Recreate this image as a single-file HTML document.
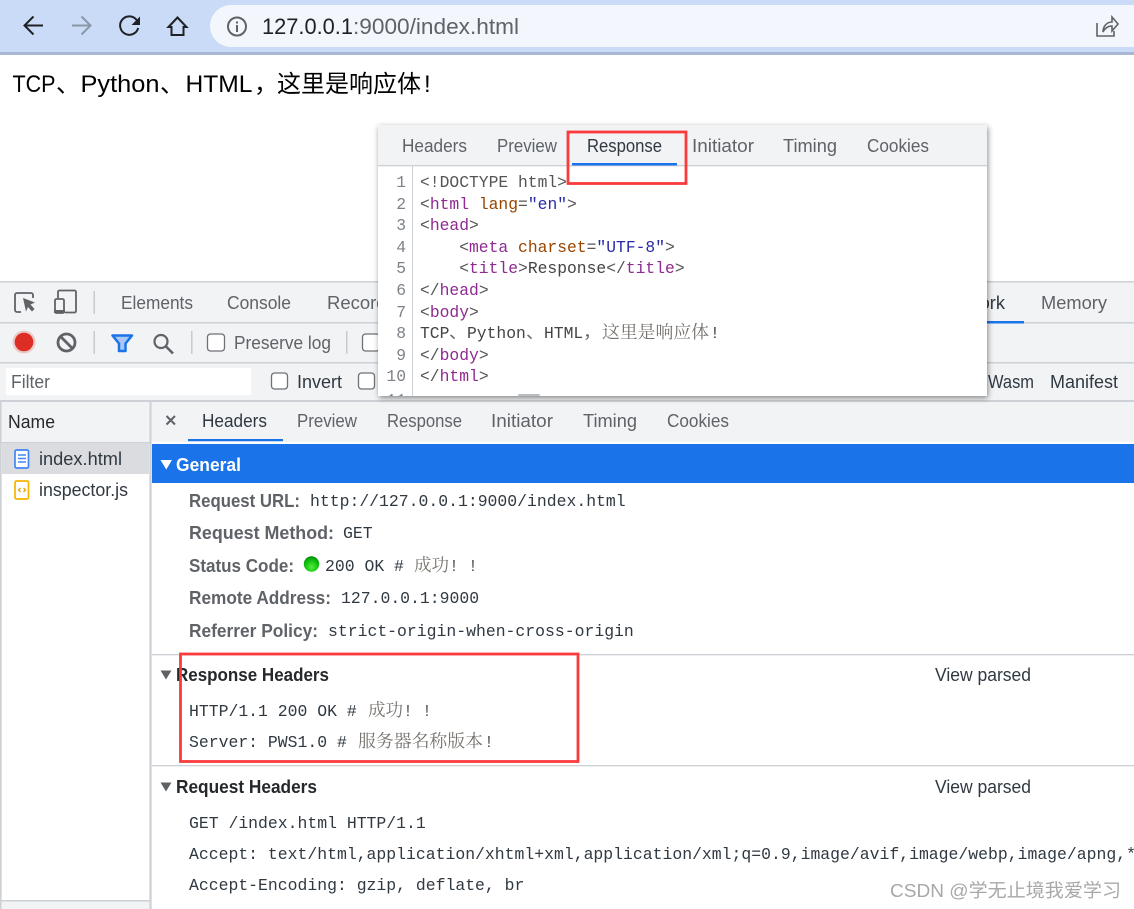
<!DOCTYPE html>
<html lang="zh">
<head>
<meta charset="utf-8">
<title>DevTools Response</title>
<style>
html,body{margin:0;padding:0;background:#fff;width:1134px;height:909px;overflow:hidden}
svg{display:block}
text{white-space:pre}
.s{font-family:"Liberation Sans","Noto Sans CJK SC",sans-serif;font-size:18px;fill:#5f6368}
.d{fill:#303942}
.b{font-family:"Liberation Sans","Noto Sans CJK SC",sans-serif;font-size:18px;font-weight:700;fill:#5f6368}
.h{fill:#26292c}
.m{font-family:"Liberation Mono","Noto Sans CJK SC",monospace;font-size:16.45px;fill:#303942}
.c{font-family:"Liberation Mono","Noto Sans CJK SC",monospace;font-size:16.33px;fill:#555}
.cn{font-family:"Noto Serif CJK SC","Liberation Serif",serif;font-size:17.5px;fill:#77736e}
.g{fill:#8e2a90}.a{fill:#994500}.v{fill:#2a2aa6}.t{fill:#444}
.n{font-family:"Liberation Mono",monospace;font-size:16.33px;fill:#7d8288;text-anchor:end}
.p{font-family:"Liberation Sans","Noto Sans CJK SC",sans-serif;font-size:24px;fill:#000}
</style>
</head>
<body>
<svg width="1134" height="909" viewBox="0 0 1134 909" xmlns="http://www.w3.org/2000/svg">
<defs>
<filter id="sh" x="-5%" y="-5%" width="110%" height="112%"><feDropShadow dx="1" dy="2" stdDeviation="3" flood-color="#000" flood-opacity=".45"/></filter>
<radialGradient id="gd" cx=".5" cy=".7" r=".7"><stop offset="0" stop-color="#52ee3c"/><stop offset=".7" stop-color="#0bb80b"/><stop offset="1" stop-color="#058a05"/></radialGradient>
<clipPath id="pc"><rect x="378" y="125" width="609" height="271"/></clipPath>
</defs>

<!-- browser toolbar -->
<rect width="1134" height="53" fill="#c9dbf6"/>
<rect y="52" width="1134" height="3" fill="#a8b8d3"/>
<rect x="210" y="5" width="1000" height="42" rx="21" fill="#f3f7fd"/>
<g fill="none" stroke-width="2">
<path d="M43 25.500H25M33.500 16.500l-9 9 9 9" stroke="#202124"/>
<path d="M72 25.500H90M81.500 16.500l9 9-9 9" stroke="#8a97a8"/>
<path d="M137 20.500A9.200 9.200 0 1 0 138.200 28" stroke="#202124"/>
<path d="M168.500 27l9-9.500 9 9.500h-3v8h-12v-8z" stroke="#202124" stroke-linejoin="miter"/>
<circle cx="237" cy="26.500" r="9" stroke="#5f6368" stroke-width="2"/>
</g>
<path d="M140 16.500v8.500h-8.500z" fill="#202124"/>
<rect x="236" y="25" width="2" height="7" fill="#5f6368"/><rect x="236" y="21.500" width="2" height="2" fill="#5f6368"/>
<path d="M1097 23v13h17v-5M1103 32c0-6 4-10 9-10v-5l6 7-6 7v-5c-4 0-7 2-9 6z" fill="none" stroke="#5f6368" stroke-width="1.600"/>
<text x="262" y="34" class="s" style="font-size:22px;fill:#202124" textLength="91" lengthAdjust="spacingAndGlyphs">127.0.0.1</text>
<text x="353" y="34" class="s" style="font-size:22px;fill:#5f6368" textLength="166" lengthAdjust="spacingAndGlyphs">:9000/index.html</text>

<!-- page body -->
<text x="12.500" y="92" class="p" textLength="43" lengthAdjust="spacingAndGlyphs">TCP</text>
<text x="56" y="92" class="p">、</text>
<text x="80.500" y="92" class="p" textLength="79" lengthAdjust="spacingAndGlyphs">Python</text>
<text x="160" y="92" class="p">、</text>
<text x="185.500" y="92" class="p" textLength="67" lengthAdjust="spacingAndGlyphs">HTML</text>
<text x="254" y="92" class="p">，</text>
<text x="277" y="92" class="p" textLength="144" lengthAdjust="spacingAndGlyphs">这里是响应体</text>
<text x="424" y="92" class="p">!</text>

<!-- devtools -->
<rect y="281" width="1134" height="628" fill="#f1f3f5"/>
<rect y="281" width="1134" height="1.500" fill="#cdd0d4"/>
<rect y="322" width="1134" height="1.500" fill="#cdd0d4"/>
<rect y="362" width="1134" height="1.500" fill="#cdd0d4"/>
<rect y="400" width="1134" height="2" fill="#cdd0d4"/>

<!-- tab row -->
<path d="M21 312h-4a2 2 0 0 1-2-2v-15a2 2 0 0 1 2-2h14a2 2 0 0 1 2 2v3" fill="none" stroke="#5f6368" stroke-width="1.800"/>
<path d="M23 298l12 4.500-4.500 2 4 4.500-2.500 2.500-4-4.500-2 4.500z" fill="#5f6368"/>
<path d="M58 298v-6a1.500 1.500 0 0 1 1.500-1.500h15a1.500 1.500 0 0 1 1.500 1.500v19a1.500 1.500 0 0 1-1.500 1.500H65" fill="none" stroke="#5f6368" stroke-width="1.800"/>
<rect x="55" y="299" width="9" height="14" rx="1.500" fill="none" stroke="#5f6368" stroke-width="1.800"/>
<rect x="54" y="310" width="11" height="3" fill="#5f6368"/>
<rect x="93.500" y="291" width="1.500" height="23" fill="#c8cbd0"/>
<text x="121" y="309" class="s" textLength="72" lengthAdjust="spacingAndGlyphs">Elements</text>
<text x="227" y="309" class="s" textLength="64" lengthAdjust="spacingAndGlyphs">Console</text>
<text x="327" y="309" class="s" textLength="76" lengthAdjust="spacingAndGlyphs">Recorder</text>
<text x="938" y="309" class="s d" textLength="67" lengthAdjust="spacingAndGlyphs">Network</text>
<rect x="900" y="321" width="124" height="2.500" fill="#1a73e8"/>
<text x="1041" y="309" class="s" textLength="66" lengthAdjust="spacingAndGlyphs">Memory</text>

<!-- network toolbar -->
<circle cx="24" cy="342" r="11.500" fill="#e8b8b6" opacity=".75"/>
<circle cx="24" cy="342" r="9.300" fill="#dc2e24"/>
<circle cx="66.500" cy="342.500" r="8.500" fill="none" stroke="#5f6368" stroke-width="2.800"/>
<path d="M60.500 336.500l12 12" stroke="#5f6368" stroke-width="2.800"/>
<rect x="93.500" y="331" width="1.500" height="23" fill="#c8cbd0"/>
<path d="M112.500 335.500h19.500l-6.500 8v7.500h-6.500v-7.500z" fill="#a9c8f3" stroke="#1a73e8" stroke-width="2.500" stroke-linejoin="round"/>
<circle cx="161" cy="341.500" r="6.500" fill="none" stroke="#5f6368" stroke-width="2.200"/>
<path d="M166 346.500l7 7" stroke="#5f6368" stroke-width="2.600"/>
<rect x="191" y="331" width="1.500" height="23" fill="#c8cbd0"/>
<rect x="207.500" y="334" width="17" height="17" rx="3" fill="#fff" stroke="#6e7277" stroke-width="1.300"/>
<text x="234" y="349" class="s" textLength="97" lengthAdjust="spacingAndGlyphs">Preserve log</text>
<rect x="346" y="331" width="1.500" height="23" fill="#c8cbd0"/>
<rect x="362.500" y="334" width="17" height="17" rx="3" fill="#fff" stroke="#6e7277" stroke-width="1.300"/>

<!-- filter row -->
<rect x="6" y="368" width="245" height="27" fill="#fff"/>
<text x="11" y="388" class="s" textLength="39" lengthAdjust="spacingAndGlyphs">Filter</text>
<rect x="271.500" y="373" width="16" height="16" rx="3" fill="#fff" stroke="#6e7277" stroke-width="1.300"/>
<text x="297" y="388" class="s d" textLength="45" lengthAdjust="spacingAndGlyphs">Invert</text>
<rect x="358.500" y="373" width="16" height="16" rx="3" fill="#fff" stroke="#6e7277" stroke-width="1.300"/>
<text x="988" y="388" class="s d" textLength="46" lengthAdjust="spacingAndGlyphs">Wasm</text>
<text x="1050" y="388" class="s d" textLength="68" lengthAdjust="spacingAndGlyphs">Manifest</text>

<!-- request list -->
<rect x="0" y="402" width="1.500" height="507" fill="#cdd0d4"/>
<rect x="1.500" y="402" width="148" height="41" fill="#f1f3f5"/>
<rect x="1.500" y="442" width="148" height="1.500" fill="#cdd0d4"/>
<rect x="2" y="443" width="147" height="31" fill="#dadce0"/>
<rect x="2" y="474" width="147" height="426" fill="#fff"/>
<rect x="0" y="900" width="150" height="1.500" fill="#cdd0d4"/>
<rect x="149.500" y="402" width="2" height="507" fill="#cdd0d4"/>
<text x="8" y="428" class="s h" textLength="47" lengthAdjust="spacingAndGlyphs">Name</text>
<rect x="15" y="450" width="13.500" height="18" rx="1.500" fill="#fff" stroke="#4285f4" stroke-width="1.700"/>
<path d="M18 455h8M18 458.500h8M18 462h8" stroke="#4285f4" stroke-width="1.500"/>
<text x="39" y="465" class="s d" textLength="83" lengthAdjust="spacingAndGlyphs">index.html</text>
<rect x="15" y="481" width="13.500" height="18" rx="1.500" fill="#fff" stroke="#f5b400" stroke-width="1.700"/>
<path d="M20.500 488l-2 2 2 2M23.500 488l2 2-2 2" fill="none" stroke="#e8a200" stroke-width="1.300"/>
<text x="39" y="496" class="s d" textLength="89" lengthAdjust="spacingAndGlyphs">inspector.js</text>

<!-- details -->
<rect x="152" y="402" width="982" height="42" fill="#f1f3f5"/>
<rect x="152" y="442" width="982" height="467" fill="#fff"/>
<path d="M166.500 416l8.500 8.500M175 416l-8.500 8.500" stroke="#5f6368" stroke-width="2"/>
<text x="202" y="427" class="s d" textLength="65" lengthAdjust="spacingAndGlyphs">Headers</text>
<rect x="188" y="439" width="95" height="2.200" fill="#1a73e8"/>
<text x="297" y="427" class="s" textLength="60" lengthAdjust="spacingAndGlyphs">Preview</text>
<text x="387" y="427" class="s" textLength="75" lengthAdjust="spacingAndGlyphs">Response</text>
<text x="491" y="427" class="s" textLength="62" lengthAdjust="spacingAndGlyphs">Initiator</text>
<text x="583" y="427" class="s" textLength="54" lengthAdjust="spacingAndGlyphs">Timing</text>
<text x="667" y="427" class="s" textLength="62" lengthAdjust="spacingAndGlyphs">Cookies</text>

<rect x="152" y="444" width="982" height="39" fill="#1a73e8"/>
<path d="M160.500 460h11.500l-5.750 9.500z" fill="#fff"/>
<text x="176" y="471" class="b" style="fill:#fff" textLength="65" lengthAdjust="spacingAndGlyphs">General</text>

<text x="189" y="507" class="b" textLength="111" lengthAdjust="spacingAndGlyphs">Request URL:</text>
<text x="310" y="506" class="m">http://127.0.0.1:9000/index.html</text>
<text x="189" y="539" class="b" textLength="145" lengthAdjust="spacingAndGlyphs">Request Method:</text>
<text x="343" y="538" class="m">GET</text>
<text x="189" y="572" class="b" textLength="105" lengthAdjust="spacingAndGlyphs">Status Code:</text>
<circle cx="311.500" cy="564" r="7.700" fill="url(#gd)"/>
<text x="325" y="571" class="m">200 OK #</text>
<text x="414" y="571" class="cn" textLength="35" lengthAdjust="spacingAndGlyphs">成功</text>
<text x="449" y="571" class="m" style="fill:#555">!</text>
<text x="468" y="571" class="m" style="fill:#555">!</text>
<text x="189" y="604" class="b" textLength="142" lengthAdjust="spacingAndGlyphs">Remote Address:</text>
<text x="341" y="603" class="m">127.0.0.1:9000</text>
<text x="189" y="637" class="b" textLength="129" lengthAdjust="spacingAndGlyphs">Referrer Policy:</text>
<text x="328" y="636" class="m">strict-origin-when-cross-origin</text>

<rect x="152" y="654" width="982" height="1.300" fill="#cdd0d4"/>
<path d="M160.500 670.500h11l-5.500 9z" fill="#5f6368"/>
<text x="176" y="681" class="b h" textLength="153" lengthAdjust="spacingAndGlyphs">Response Headers</text>
<text x="935" y="681" class="s d" textLength="96" lengthAdjust="spacingAndGlyphs">View parsed</text>
<text x="189" y="716" class="m">HTTP/1.1 200 OK #</text>
<text x="368" y="716" class="cn" textLength="35" lengthAdjust="spacingAndGlyphs">成功</text>
<text x="403" y="716" class="m" style="fill:#555">!</text>
<text x="422" y="716" class="m" style="fill:#555">!</text>
<text x="189" y="747" class="m">Server: PWS1.0 #</text>
<text x="358" y="747" class="cn" textLength="125" lengthAdjust="spacingAndGlyphs">服务器名称版本</text>
<text x="484" y="747" class="m" style="fill:#555">!</text>

<rect x="152" y="765" width="982" height="1.300" fill="#cdd0d4"/>
<path d="M160.500 782.500h11l-5.500 9z" fill="#5f6368"/>
<text x="176" y="793" class="b h" textLength="141" lengthAdjust="spacingAndGlyphs">Request Headers</text>
<text x="935" y="793" class="s d" textLength="96" lengthAdjust="spacingAndGlyphs">View parsed</text>
<text x="189" y="828" class="m">GET /index.html HTTP/1.1</text>
<text x="189" y="859" class="m">Accept: text/html,application/xhtml+xml,application/xml;q=0.9,image/avif,image/webp,image/apng,*</text>
<text x="189" y="890" class="m">Accept-Encoding: gzip, deflate, br</text>

<!-- watermark -->
<text x="890" y="897" class="s" style="fill:#a8a8a8;font-size:18.500px" textLength="231" lengthAdjust="spacingAndGlyphs">CSDN @学无止境我爱学习</text>

<!-- pop-over panel -->
<rect x="378" y="125" width="609" height="271" fill="#fff" filter="url(#sh)"/>
<g clip-path="url(#pc)">
<rect x="378" y="125" width="609" height="40" fill="#f1f3f5"/>
<rect x="378" y="165" width="609" height="1.300" fill="#cdd0d4"/>
<text x="402" y="152" class="s" textLength="65" lengthAdjust="spacingAndGlyphs">Headers</text>
<text x="497" y="152" class="s" textLength="60" lengthAdjust="spacingAndGlyphs">Preview</text>
<text x="587" y="152" class="s d" textLength="75" lengthAdjust="spacingAndGlyphs">Response</text>
<rect x="572" y="163" width="105" height="2.500" fill="#1a73e8"/>
<text x="692" y="152" class="s" textLength="62" lengthAdjust="spacingAndGlyphs">Initiator</text>
<text x="783" y="152" class="s" textLength="54" lengthAdjust="spacingAndGlyphs">Timing</text>
<text x="867" y="152" class="s" textLength="62" lengthAdjust="spacingAndGlyphs">Cookies</text>

<rect x="412" y="166" width="1" height="230" fill="#cdd0d4"/>
<text x="406" y="187" class="n">1</text>
<text x="406" y="209" class="n">2</text>
<text x="406" y="230" class="n">3</text>
<text x="406" y="252" class="n">4</text>
<text x="406" y="273" class="n">5</text>
<text x="406" y="295" class="n">6</text>
<text x="406" y="317" class="n">7</text>
<text x="406" y="338" class="n">8</text>
<text x="406" y="360" class="n">9</text>
<text x="406" y="381" class="n">10</text>
<text x="406" y="405" class="n">11</text>

<text x="420" y="187" class="c">&lt;!DOCTYPE html&gt;</text>
<text x="420" y="209" class="c">&lt;<tspan class="g">html</tspan> <tspan class="a">lang</tspan>=<tspan class="v">"en"</tspan>&gt;</text>
<text x="420" y="230" class="c">&lt;<tspan class="g">head</tspan>&gt;</text>
<text x="420" y="252" class="c">    &lt;<tspan class="g">meta</tspan> <tspan class="a">charset</tspan>=<tspan class="v">"UTF-8"</tspan>&gt;</text>
<text x="420" y="273" class="c">    &lt;<tspan class="g">title</tspan>&gt;<tspan class="t">Response</tspan>&lt;/<tspan class="g">title</tspan>&gt;</text>
<text x="420" y="295" class="c">&lt;/<tspan class="g">head</tspan>&gt;</text>
<text x="420" y="317" class="c">&lt;<tspan class="g">body</tspan>&gt;</text>
<text x="420" y="338" class="c"><tspan class="t">TCP</tspan></text>
<text x="449" y="338" class="c" style="fill:#666" textLength="18" lengthAdjust="spacingAndGlyphs">、</text>
<text x="467" y="338" class="c"><tspan class="t">Python</tspan></text>
<text x="526" y="338" class="c" style="fill:#666" textLength="18" lengthAdjust="spacingAndGlyphs">、</text>
<text x="544" y="338" class="c"><tspan class="t">HTML</tspan></text>
<text x="583" y="338" class="c" style="fill:#666" textLength="18" lengthAdjust="spacingAndGlyphs">，</text>
<text x="602" y="338" class="cn" textLength="107" lengthAdjust="spacingAndGlyphs">这里是响应体</text>
<text x="710" y="338" class="c" style="fill:#444">!</text>
<text x="420" y="360" class="c">&lt;/<tspan class="g">body</tspan>&gt;</text>
<text x="420" y="381" class="c">&lt;/<tspan class="g">html</tspan>&gt;</text>
<rect x="518" y="394" width="22" height="2" rx="1" fill="#b9bcc0"/>
</g>

<!-- red annotation boxes -->
<rect x="568" y="132" width="118" height="51.500" fill="none" stroke="#fb3a3c" stroke-width="2.800"/>
<rect x="180.500" y="654" width="397.500" height="107.500" fill="none" stroke="#fb3a3c" stroke-width="2.800"/>
</svg>
</body>
</html>
